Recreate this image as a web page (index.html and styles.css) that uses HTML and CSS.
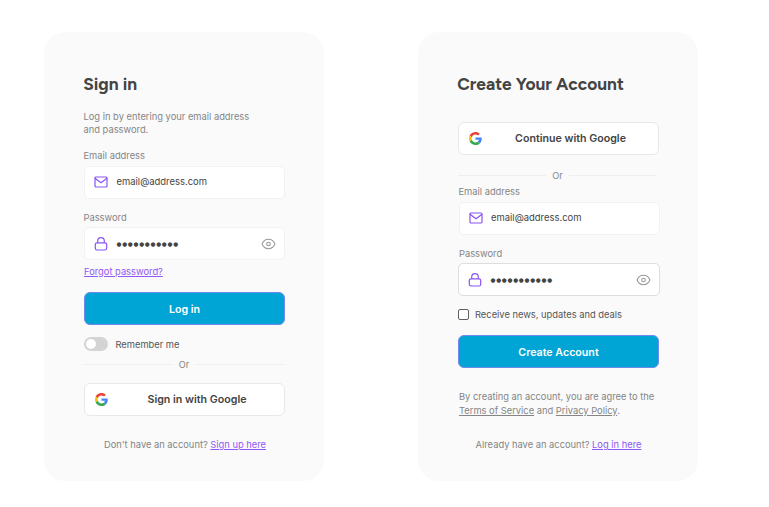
FILE: index.html
```
<!DOCTYPE html>
<html lang="en">
<head>
<meta charset="utf-8">
<title>Sign in</title>
<link rel="stylesheet" href="styles.css">
</head>
<body>
<svg class="sprite" aria-hidden="true">
  <symbol id="mail" viewBox="0 0 14 14"><g fill="none" stroke="currentColor" stroke-width="1.2" stroke-linejoin="round" stroke-linecap="round"><rect x="1" y="2" width="12" height="10" rx="1"/><path d="M1.3 3.4 7 7.700l5.700-4.300"/></g></symbol>
  <symbol id="lock" viewBox="0 0 14 14"><g fill="none" stroke="currentColor" stroke-width="1.2" stroke-linejoin="round"><rect x="1.300" y="5.800" width="11.400" height="7.200" rx="1.800"/><path d="M3.700 5.800V3.900a3.300 3.300 0 0 1 6.600 0v1.900"/></g></symbol>
  <symbol id="eye" viewBox="0 0 14 14"><g fill="none" stroke="currentColor" stroke-width="1.100"><path d="M.6 7C1.800 4 4.200 2.300 7 2.300S12.200 4 13.400 7C12.200 10 9.800 11.700 7 11.700S1.800 10 .6 7z"/><circle cx="7" cy="7" r="1.800"/></g></symbol>
  <symbol id="google" viewBox="0 0 48 48"><path fill="#EA4335" d="M24 9.500c3.540 0 6.710 1.220 9.210 3.600l6.850-6.850C35.900 2.380 30.470 0 24 0 14.620 0 6.510 5.380 2.560 13.220l7.980 6.190C12.430 13.720 17.740 9.500 24 9.500z"/><path fill="#4285F4" d="M46.980 24.550c0-1.570-.15-3.090-.38-4.550H24v9.020h12.940c-.58 2.960-2.260 5.480-4.780 7.180l7.730 6c4.510-4.180 7.090-10.360 7.090-17.650z"/><path fill="#FBBC05" d="M10.530 28.590c-.48-1.450-.76-2.990-.76-4.590s.27-3.140.76-4.590l-7.980-6.190C.92 16.460 0 20.120 0 24c0 3.880.92 7.540 2.560 10.780l7.970-6.190z"/><path fill="#34A853" d="M24 48c6.480 0 11.930-2.130 15.890-5.810l-7.730-6c-2.150 1.450-4.920 2.300-8.160 2.300-6.260 0-11.570-4.220-13.470-9.910l-7.980 6.190C6.510 42.620 14.620 48 24 48z"/></symbol>
</svg>
<main class="page">
  <section class="card signin">
    <h1>Sign in</h1>
    <p class="intro">Log in by entering your email address<br>and password.</p>
    <div class="label">Email address</div>
    <div class="field email"><svg class="icon"><use href="#mail"/></svg><span class="value">email@address.com</span></div>
    <div class="label second">Password</div>
    <div class="field"><svg class="icon"><use href="#lock"/></svg><span class="dots">●●●●●●●●●●●</span><svg class="eye"><use href="#eye"/></svg></div>
    <a class="link forgot">Forgot password?</a>
    <div class="button primary">Log in</div>
    <div class="option"><span class="toggle"></span><span class="remember">Remember me</span></div>
    <div class="or">Or</div>
    <div class="button google"><svg class="logo"><use href="#google"/></svg><span>Sign in with Google</span></div>
    <p class="footer">Don't have an account? <a class="link">Sign up here</a></p>
  </section>
  <section class="card signup">
    <h1>Create Your Account</h1>
    <div class="button google"><svg class="logo"><use href="#google"/></svg><span>Continue with Google</span></div>
    <div class="or">Or</div>
    <div class="label">Email address</div>
    <div class="field email"><svg class="icon"><use href="#mail"/></svg><span class="value">email@address.com</span></div>
    <div class="label second">Password</div>
    <div class="field outlined"><svg class="icon"><use href="#lock"/></svg><span class="dots">●●●●●●●●●●●</span><svg class="eye"><use href="#eye"/></svg></div>
    <div class="option"><span class="checkbox"></span><span>Receive news, updates and deals</span></div>
    <div class="button primary">Create Account</div>
    <p class="terms">By creating an account, you are agree to the<br><a>Terms of Service</a> and <a>Privacy Policy</a>.</p>
    <p class="footer">Already have an account? <a class="link">Log in here</a></p>
  </section>
</main>
</body>
</html>
```
FILE: styles.css
```
* { box-sizing: border-box; }
body { margin: 0; background: #fff; font-family: Inter, "Liberation Sans", sans-serif; font-size: 9.333px; color: #858585; }
.sprite { position: absolute; width: 0; height: 0; }
.page { display: flex; gap: 94px; padding: 32px 0 0 44px; }
.card { width: 280px; height: 449px; padding: 40px 39px 0 40px; border-radius: 21px; background: #fafafa; display: flex; flex-direction: column; flex: none; white-space: nowrap; }
h1, p { margin: 0; }
h1 { height: 24px; line-height: 24px; margin-left: -0.8px; font-family: Figtree, Inter, sans-serif; font-size: 17.333px; font-weight: 700; color: #444; }
.intro { margin-top: 14px; margin-left: -0.5px; line-height: 13px; }
.label { height: 14px; line-height: 14px; }
.signin .label { margin-top: 13px; margin-left: -0.5px; }
.field, .button { height: 33px; border-radius: 5px; display: flex; align-items: center; flex: none; }
.field { margin-top: 3px; padding: 0 9px; border: 1px solid #f2f2f2; background: #fff; color: #444; }
.email { padding-bottom: 1px; }
.outlined { border-color: #dedede; }
.icon { width: 14px; height: 14px; margin-right: 8.5px; color: #8854f5; flex: none; }
.value { margin-top: -1px; font-size: 9.45px; }
.eye { width: 15px; height: 14px; margin-left: auto; margin-right: -1px; color: #999; }
.dots { font-family: "DejaVu Sans", sans-serif; font-size: 5.7px; letter-spacing: 0.7px; }
.link { color: #9058f6; text-decoration: underline; }
.forgot { margin-top: 5px; height: 14px; line-height: 14px; }
.button { justify-content: center; font-size: 10.667px; font-weight: 600; border-radius: 6px; }
.primary { padding-top: 1px; border: 1px solid #7188ee; background: #00a4d5; color: #fff; }
.google { position: relative; border: 1px solid #e8e8e8; background: #fff; color: #444; padding-left: 25px; }
.logo { position: absolute; left: 10.5px; top: 9px; width: 13px; height: 13px; }
.signin .logo { left: 10px; }
.option { display: flex; align-items: center; height: 14px; color: #555; }
.toggle { width: 24px; height: 14px; padding: 2px; margin-right: 7.5px; border-radius: 7px; background: #d4d4d4; }
.toggle::before { content: ""; display: block; width: 10px; height: 10px; border-radius: 50%; background: #fff; }
.checkbox { width: 11px; height: 11px; margin-right: 6px; border: 1px solid #606060; border-radius: 2px; background: #fff; }
.or { display: flex; align-items: center; gap: 6px; height: 14px; font-size: 9.2px; }
.or::before, .or::after { content: ""; flex: 1; height: 1px; background: #efefef; }
.footer { height: 14px; line-height: 14px; text-align: center; }
.terms { line-height: 14px; }
.terms a { text-decoration: underline; }

.signin .second { margin-top: 12px; }
.second + .field { margin-top: 2px; }
.signin .primary { margin-top: 13px; }
.signin .option { margin-top: 12px; }
.signin .or { margin-top: 6px; margin-right: 1px; }
.signin .google { margin-top: 12px; }
.signin .footer { margin-top: 22px; margin-left: 1px; }

.signup .google { margin-top: 26px; left: -0.5px; }
.signup .logo { left: 10.5px; }
.signup .or { margin-top: 13px; margin-right: 2px; }
.signup .label { margin-top: 3px; margin-left: 0.5px; }
.signup .field { margin-left: 0.5px; margin-right: -0.5px; }
.signup .second { margin-top: 12px; margin-left: 1px; }
.signup .outlined { margin-left: 0; margin-right: -1px; }
.signup .option { margin-top: 11px; }
.signup .primary { margin-top: 14px; }
.signup .terms { margin-top: 22px; margin-left: 1px; }
.signup .footer { margin-top: 20px; }
```
